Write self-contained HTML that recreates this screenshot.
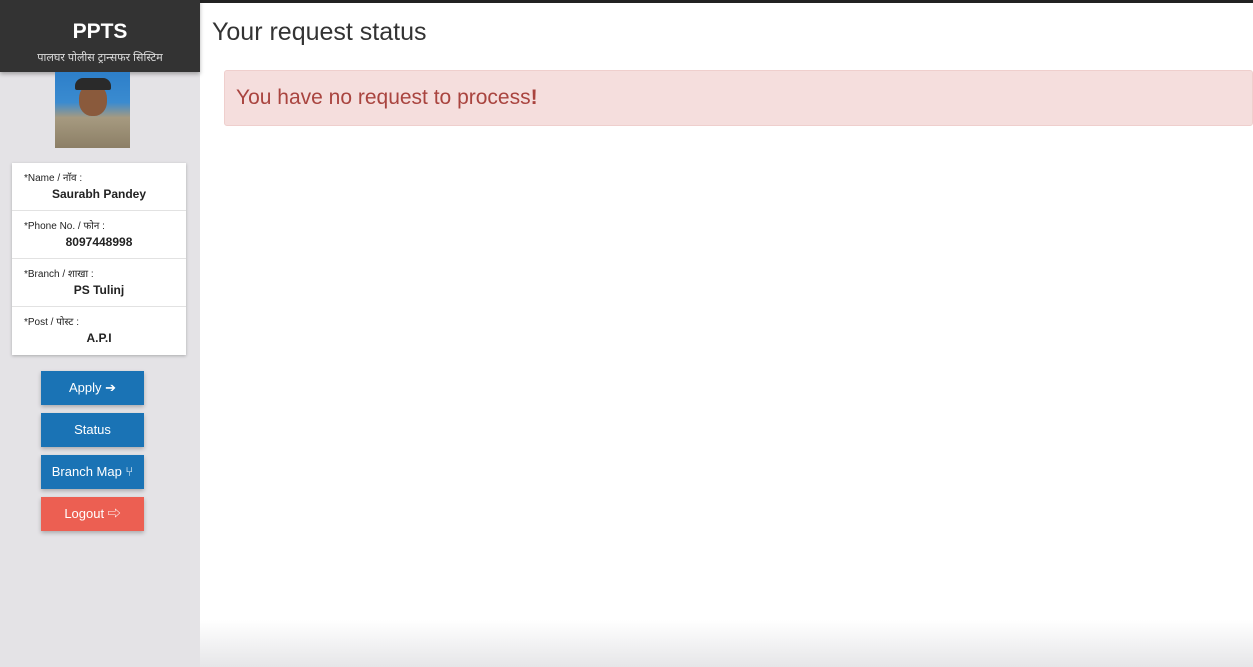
<!DOCTYPE html>
<html><head><meta charset="utf-8"><style>
*{margin:0;padding:0;box-sizing:border-box}
body{width:1253px;height:667px;overflow:hidden;background:#fff;font-family:"Liberation Sans","Noto Sans CJK SC",sans-serif;position:relative}
.top{position:absolute;left:0;top:0;width:1253px;height:3px;background:#222}
.side{position:absolute;left:0;top:0;width:200px;height:667px;background:#e4e3e6}
.hdr{position:absolute;left:0;top:0;width:200px;height:72px;background:#333;color:#fff;text-align:center;box-shadow:0 2px 4px rgba(0,0,0,.3)}
.hdr b{display:block;font-size:21px;padding-top:20px;line-height:24px}
.hdr span{display:block;font-size:11px;margin-top:6px;color:#ddd}
.photo{position:absolute;left:55px;top:72px;width:75px;height:76px;background:linear-gradient(#2d7fc9 0,#3a8bd0 40%,#a69a80 60%,#8c7f66 100%)}
.face{position:absolute;left:24px;top:12px;width:28px;height:32px;border-radius:45%;background:#8a5a3c}
.cap{position:absolute;left:20px;top:6px;width:36px;height:12px;border-radius:8px 8px 2px 2px;background:#2a2a2a}
.card{position:absolute;left:12px;top:163px;width:174px;height:192px;background:#fff;box-shadow:0 1px 3px rgba(0,0,0,.25)}
.row{height:48px;border-bottom:1px solid #e2e2e2;padding:7px 0 0 12px;font-size:10px;color:#222}
.row:last-child{border:0}
.row div{text-align:center;font-size:12px;font-weight:bold;margin-top:3px;padding-right:12px}
.btn{position:absolute;left:41px;width:103px;height:34px;background:#1a73b5;color:#fff;font-size:13px;text-align:center;line-height:34px;box-shadow:0 2px 4px rgba(0,0,0,.25)}
.red{background:#ec5f52}
.fade{position:absolute;left:200px;top:620px;width:1053px;height:47px;background:linear-gradient(rgba(230,230,232,0),#e6e6e8)}
h1{position:absolute;left:212px;top:18px;font-size:25px;font-weight:normal;color:#333}
.alert{position:absolute;left:224px;top:70px;width:1029px;height:56px;background:#f5dedd;border:1px solid #efcfcd;border-radius:3px;color:#a9443f;font-size:21px;padding:15px 0 0 11px}
</style></head><body>
<div class="side"></div>
<div class="fade"></div>
<div class="top"></div>
<div class="hdr"><b>PPTS</b><span>पालघर पोलीस ट्रान्सफर सिस्टिम</span></div>
<div class="photo"><div class="face"></div><div class="cap"></div></div>
<div class="card">
<div class="row">*Name / नाॅव :<div>Saurabh Pandey</div></div>
<div class="row">*Phone No. / फोन :<div>8097448998</div></div>
<div class="row">*Branch / शाखा :<div>PS Tulinj</div></div>
<div class="row">*Post / पोस्ट :<div>A.P.I</div></div>
</div>
<div class="btn" style="top:371px">Apply ➔</div>
<div class="btn" style="top:413px">Status</div>
<div class="btn" style="top:455px">Branch Map ⑂</div>
<div class="btn red" style="top:497px">Logout ⇨</div>
<h1>Your request status</h1>
<div class="alert">You have no request to process<b>!</b></div>
</body></html>
